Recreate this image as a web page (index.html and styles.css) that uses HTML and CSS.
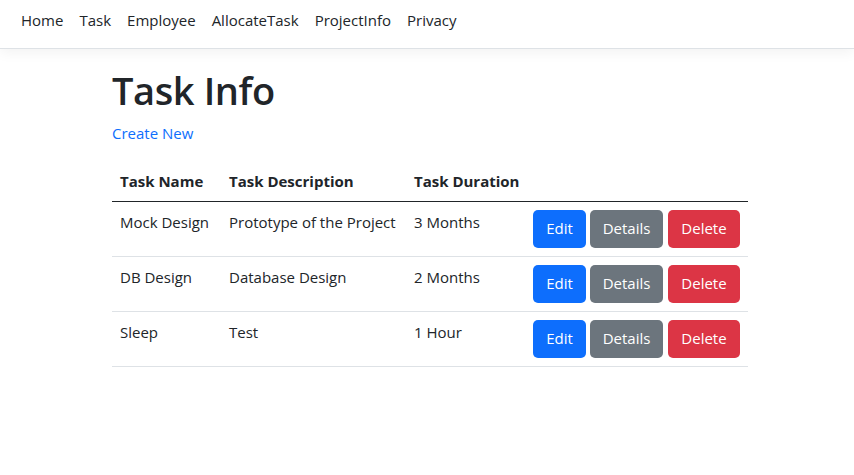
FILE: index.html
```html
<!DOCTYPE html>
<html lang="en">
<head>
<meta charset="utf-8">
<title>Task Info</title>
<link rel="stylesheet" href="styles.css">
</head>
<body>
<header class="navbar">
  <nav class="nav">
    <a class="nav-link" href="#">Home</a>
    <a class="nav-link" href="#">Task</a>
    <a class="nav-link" href="#">Employee</a>
    <a class="nav-link" href="#">AllocateTask</a>
    <a class="nav-link" href="#">ProjectInfo</a>
    <a class="nav-link" href="#">Privacy</a>
  </nav>
</header>
<main class="container">
  <h1 class="title">Task Info</h1>
  <p class="create"><a href="#" class="link">Create New</a></p>
  <table class="table">
    <colgroup>
      <col class="c1"><col class="c2"><col class="c3"><col class="c4">
    </colgroup>
    <thead>
      <tr><th>Task Name</th><th>Task Description</th><th>Task Duration</th><th></th></tr>
    </thead>
    <tbody>
      <tr>
        <td>Mock Design</td><td>Prototype of the Project</td><td>3 Months</td>
        <td><div class="actions"><a class="btn btn-primary" href="#">Edit</a><a class="btn btn-secondary" href="#">Details</a><a class="btn btn-danger" href="#">Delete</a></div></td>
      </tr>
      <tr>
        <td>DB Design</td><td>Database Design</td><td>2 Months</td>
        <td><div class="actions"><a class="btn btn-primary" href="#">Edit</a><a class="btn btn-secondary" href="#">Details</a><a class="btn btn-danger" href="#">Delete</a></div></td>
      </tr>
      <tr>
        <td>Sleep</td><td>Test</td><td>1 Hour</td>
        <td><div class="actions"><a class="btn btn-primary" href="#">Edit</a><a class="btn btn-secondary" href="#">Details</a><a class="btn btn-danger" href="#">Delete</a></div></td>
      </tr>
    </tbody>
  </table>
</main>
</body>
</html>
```
FILE: styles.css
```css
* { box-sizing: border-box; }
html, body { margin: 0; }
body {
  font-family: "Open Sans", "Noto Sans", sans-serif;
  font-size: 15px;
  line-height: 24px;
  color: #212529;
  background: #fff;
}
.navbar {
  height: 49px;
  border-bottom: 1px solid #dee2e6;
  box-shadow: 0 4px 12px rgba(0,0,0,0.05);
  display: flex;
  align-items: flex-start;
  padding: 8px 0 0 21px;
}
.nav { display: flex; gap: 16px; }
.nav-link { color: #212529; text-decoration: none; }
.container {
  width: 636px;
  margin-left: calc(50% - 315px);
  padding-top: 17px;
}
.title {
  font-size: 38px;
  font-weight: 600;
  letter-spacing: -0.4px;
  line-height: 48px;
  margin: 0 0 7px;
}
.create { margin: 0 0 16px; }
.link { color: #0d6efd; text-decoration: none; }
.table {
  width: 636px;
  border-collapse: collapse;
  table-layout: fixed;
}
.c1 { width: 109px; }
.c2 { width: 185px; }
.c3 { width: 119px; }
.c4 { width: 223px; }
.table th, .table td {
  padding: 8px;
  text-align: left;
  vertical-align: top;
  white-space: nowrap;
}
.table th { font-weight: 700; }
.table thead tr { border-bottom: 1px solid #212529; }
.table tbody tr { border-bottom: 1px solid #dee2e6; }
.actions { display: flex; gap: 4px; }
.btn {
  display: inline-block;
  height: 38px;
  padding: 6px 0;
  border-radius: 5px;
  color: #fff;
  text-decoration: none;
  text-align: center;
  font-size: 15px;
  line-height: 24px;
}
.btn-primary { background: #0d6efd; width: 53px; }
.btn-secondary { background: #6c757d; width: 73px; }
.btn-danger { background: #dc3545; width: 72px; margin-left: 1px; }
```
